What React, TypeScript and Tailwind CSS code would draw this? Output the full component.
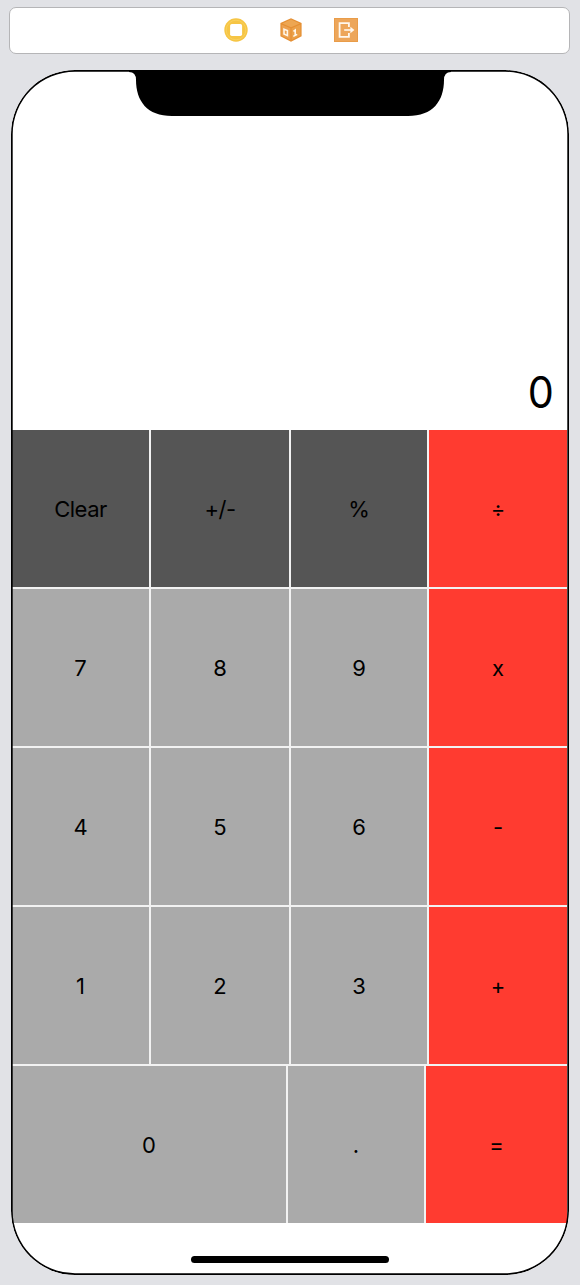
import React from "react";

type Key = { label: string; tone: "dark" | "light" | "red"; tight?: boolean };

const tones = {
  dark: "bg-[#555555]",
  light: "bg-[#aaaaaa]",
  red: "bg-[#ff3b30]",
};

const rows: Key[][] = [
  [
    { label: "Clear", tone: "dark", tight: true },
    { label: "+/-", tone: "dark", tight: true },
    { label: "%", tone: "dark" },
    { label: "÷", tone: "red" },
  ],
  [
    { label: "7", tone: "light" },
    { label: "8", tone: "light" },
    { label: "9", tone: "light" },
    { label: "x", tone: "red" },
  ],
  [
    { label: "4", tone: "light" },
    { label: "5", tone: "light" },
    { label: "6", tone: "light" },
    { label: "-", tone: "red" },
  ],
  [
    { label: "1", tone: "light" },
    { label: "2", tone: "light" },
    { label: "3", tone: "light" },
    { label: "+", tone: "red" },
  ],
];

const lastRow: Key[] = [
  { label: "0", tone: "light" },
  { label: ".", tone: "light" },
  { label: "=", tone: "red" },
];

function CalcKey({ label, tone, tight }: Key) {
  return (
    <button
      className={`flex items-center justify-center pt-[2px] text-[22px] text-black ${tight ? "tracking-[-0.5px]" : "tracking-normal"} ${tones[tone]}`}
    >
      {label}
    </button>
  );
}

function ControllerIcon() {
  return (
    <svg width="24" height="24" viewBox="0 0 24 24">
      <circle cx="12" cy="12" r="11.7" fill="#f6c544" />
      <circle cx="12" cy="12" r="9.8" fill="none" stroke="#f9d467" strokeWidth="0.7" />
      <rect x="6.1" y="6" width="12" height="12" rx="1.8" fill="#fff" />
    </svg>
  );
}

function ResponderIcon() {
  return (
    <svg width="22" height="24" viewBox="0 0 22 24">
      <path d="M11 0.3 21.6 5v13.2L11 23.8 0.4 18.2V5Z" fill="#e58f33" />
      <path d="M11 1.5 19.8 5.4 11 9.3 2.2 5.4Z" fill="#eda652" />
      <path d="M1.6 6.5 10.4 10.3v11.7L1.6 17.5Z" fill="#eca150" />
      <path d="M20.4 6.5 11.6 10.3v11.7l8.8-4.5Z" fill="#eba049" />
      <path d="M4 11.2 7.4 12.6v5L4 16Z" fill="none" stroke="#fff6e8" strokeWidth="1.6" />
      <path d="m13.4 13.3 1.8-1.2v5.3m-1.9 1 3.9-2" fill="none" stroke="#fff6e8" strokeWidth="1.6" />
    </svg>
  );
}

function ExitIcon() {
  return (
    <svg width="24" height="24" viewBox="0 0 24 24">
      <rect width="24" height="24" fill="#e99c49" />
      <rect x="1" y="1" width="22" height="22" fill="#eda65a" />
      <path d="M14.9 9V5.1H5.6v13.8h9.3V15" fill="none" stroke="#fff8ee" strokeWidth="1.8" />
      <path d="M10.2 12h8.6" fill="none" stroke="#fff8ee" strokeWidth="1.6" />
      <path d="m16.4 8.8 4 3.2-4 3.2Z" fill="#fff8ee" />
    </svg>
  );
}

export default function App() {
  return (
    <div className="flex h-[1285px] w-[580px] flex-col bg-[#e1e2e6] pl-[9px] pt-[7px] font-['Inter',sans-serif]">
      <header className="flex h-[47px] w-[561px] shrink-0 items-center justify-center gap-8 rounded-[7px] border-[1.5px] border-[#b5b5b7] bg-white pb-[2px] pl-[2px]">
        <ControllerIcon />
        <ResponderIcon />
        <ExitIcon />
      </header>

      <main className="relative ml-[2px] mt-4 flex h-[1205px] w-[557.5px] shrink-0 flex-col overflow-hidden rounded-[64px] bg-white">
        <svg className="absolute left-[118px] top-0" width="322" height="46" viewBox="0 0 322 46">
          <path
            d="M0 0H322V2Q315 2 315 10C315 31 304 46 279 46H43C18 46 7 31 7 10Q7 2 0 2Z"
            fill="#000"
          />
        </svg>

        <section className="flex h-[360px] shrink-0 items-end justify-end pb-[10px] pr-[15px] text-[44px] leading-[56px] text-black">
          <span className="origin-right scale-x-[0.94]">0</span>
        </section>

        <section className="flex h-[793px] shrink-0 flex-col gap-[2px] bg-[#f2f2f2] pl-px pr-[1.5px]">
          {rows.map((row, i) => (
            <div key={i} className="grid flex-1 grid-cols-[137px_138px_136px_1fr] gap-[2px]">
              {row.map((key) => (
                <CalcKey key={key.label} {...key} />
              ))}
            </div>
          ))}
          <div className="grid flex-1 grid-cols-[274px_136px_1fr] gap-[2px]">
            {lastRow.map((key) => (
              <CalcKey key={key.label} {...key} />
            ))}
          </div>
        </section>

        <div className="flex flex-1 items-start justify-center pt-[33px]">
          <div className="h-[7px] w-[198px] rounded-full bg-black" />
        </div>

        <div className="pointer-events-none absolute inset-0 rounded-[64px] shadow-[inset_0_0_0_1.7px_#000]" />
      </main>
    </div>
  );
}
